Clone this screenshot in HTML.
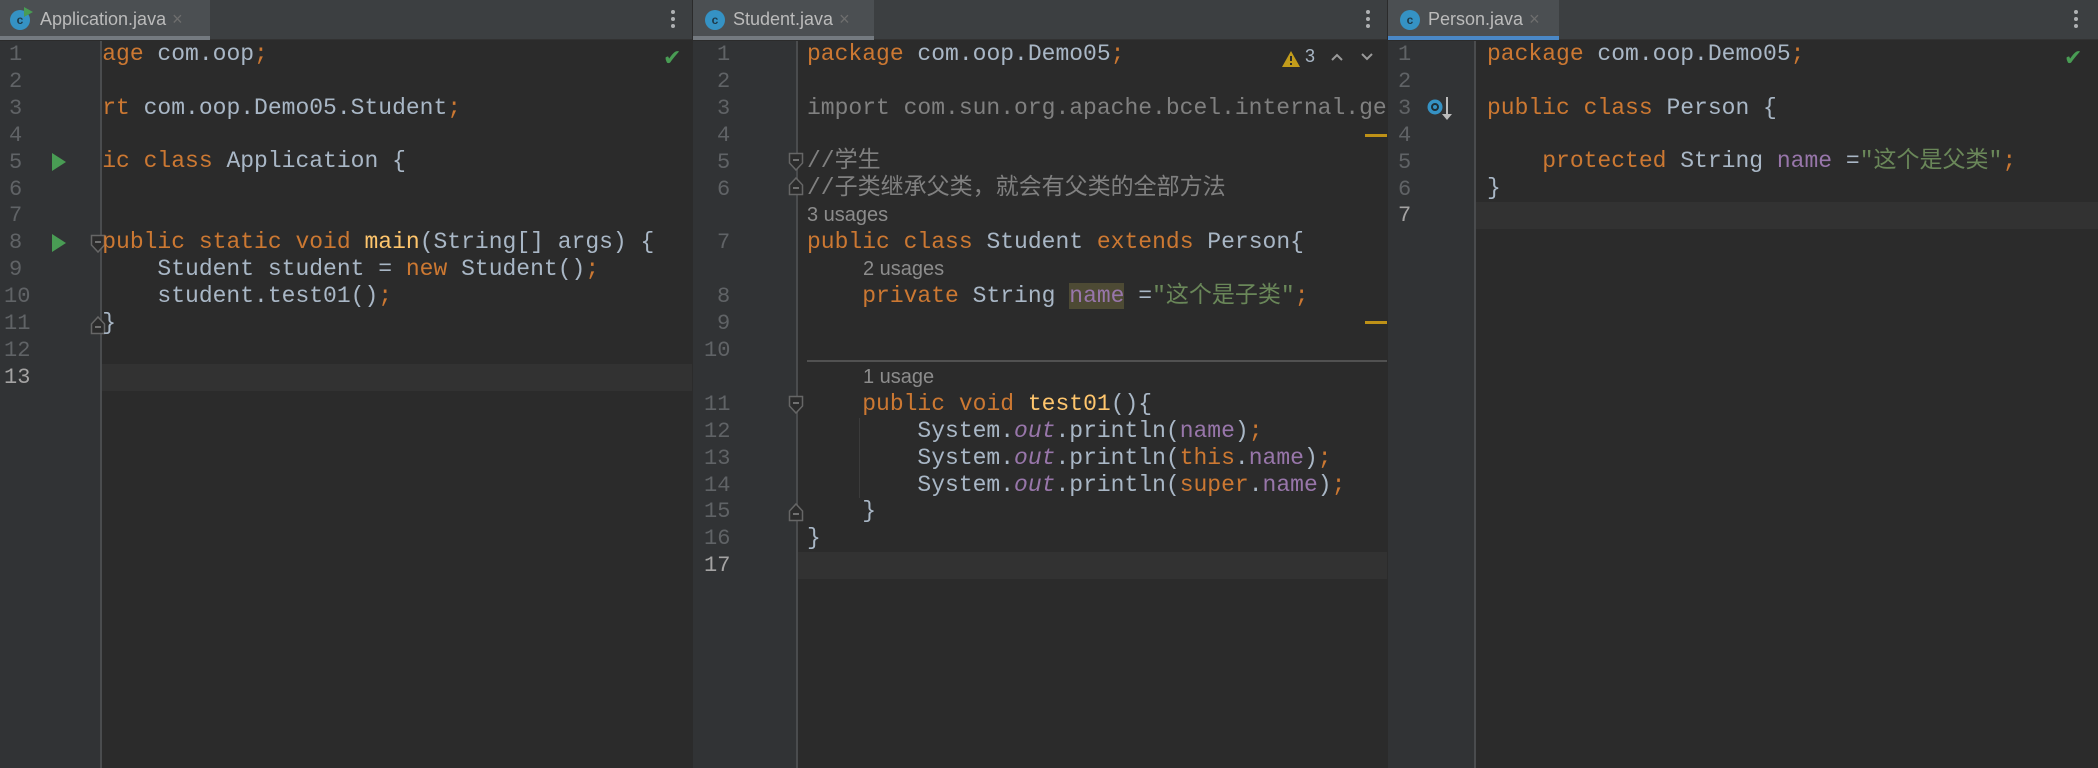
<!DOCTYPE html>
<html><head><meta charset="utf-8"><style>
*{margin:0;padding:0;box-sizing:border-box}
body{width:2098px;height:768px;background:#2b2b2b;position:relative;overflow:hidden;font-family:"Liberation Mono","Noto Sans CJK SC",monospace}
.panel{position:absolute;top:0;height:768px;overflow:hidden;background:#2b2b2b}
.tabbar{position:absolute;left:0;right:0;top:0;height:40px;background:#3c3f41;border-bottom:1px solid #323232}
.tab{position:absolute;top:0;height:40px;background:#4b4f52;font-family:"Liberation Sans",sans-serif;font-size:18px;color:#bbbbbb;line-height:38px;white-space:nowrap}
.tab .ul{position:absolute;left:0;right:0;bottom:0;height:4px;background:#747a80}
.tab .ic{position:absolute;top:10px;width:20px;height:20px;border-radius:50%;background:#3592c4;color:#1e3a4a;font-size:12px;line-height:20px;text-align:center;font-weight:bold}
.tab .x{color:#6e6e6e;font-size:18px;margin-left:6px}
.kebab{position:absolute;top:10px;width:4px}
.kebab i{display:block;width:4px;height:4px;border-radius:50%;background:#afb1b3;margin-bottom:3px}
.gut{position:absolute;top:41px;bottom:0;left:0;background:#313335}
.gline{position:absolute;top:41px;bottom:0;width:2px;background:#4a4c4e}
.ln{position:absolute;font-size:22px;color:#606366;line-height:27px;height:27px}
.cur{color:#a4a3a3}
.code{position:absolute;top:41px;bottom:0;overflow:hidden}
.l{position:absolute;left:0;white-space:pre;font-size:23px;line-height:27px;height:27px;color:#a9b7c6}
.h{position:absolute;white-space:pre;font-family:"Liberation Sans",sans-serif;font-size:20px;line-height:27px;color:#8c8c8c}
.k{color:#cc7832}.s{color:#6a8759}.f{color:#9876aa}.m{color:#ffc66d}.c{color:#808080}.it{font-style:italic}
.curline{position:absolute;left:0;right:0;height:27px;background:#323232}
.run{position:absolute;width:0;height:0;border-top:9px solid transparent;border-bottom:9px solid transparent;border-left:14px solid #499c54}
.chk{position:absolute;color:#499c54;font-size:22px;font-family:"DejaVu Sans",sans-serif}
</style></head><body>

<!-- Panel 1 -->
<div class="panel" style="left:0;width:692px">
 <div class="tabbar"></div>
 <div class="tab" style="left:0;width:210px"><span class="ic" style="left:10px">c</span><svg style="position:absolute;left:22px;top:6px" width="12" height="12"><path d="M2 1 L11 6 L2 11Z" fill="#499c54"/></svg><span style="position:absolute;left:40px">Application.java<span class="x">×</span></span><div class="ul"></div></div>
 <div class="kebab" style="left:671px"><i></i><i></i><i></i></div>
 <div class="gut" style="width:100px"></div>
 <div class="gline" style="left:100px"></div>
 <div class="curline" style="top:364px;left:102px"></div>
 <div class="ln" style="left:9px;top:41px">1</div>
 <div class="ln" style="left:9px;top:68px">2</div>
 <div class="ln" style="left:9px;top:95px">3</div>
 <div class="ln" style="left:9px;top:122px">4</div>
 <div class="ln" style="left:9px;top:149px">5</div>
 <div class="ln" style="left:9px;top:176px">6</div>
 <div class="ln" style="left:9px;top:202px">7</div>
 <div class="ln" style="left:9px;top:229px">8</div>
 <div class="ln" style="left:9px;top:256px">9</div>
 <div class="ln" style="left:4px;top:283px">10</div>
 <div class="ln" style="left:4px;top:310px">11</div>
 <div class="ln" style="left:4px;top:337px">12</div>
 <div class="ln cur" style="left:4px;top:364px">13</div>
 <div class="run" style="left:52px;top:153px"></div>
 <div class="run" style="left:52px;top:234px"></div>
 <svg style="position:absolute;left:90px;top:234px" width="16" height="22"><path d="M1.5 1.5H14.5V11L8 18L1.5 11Z" fill="#2b2b2b" stroke="#666" stroke-width="1.5"/><path d="M5 8H11" stroke="#888" stroke-width="1.5"/></svg>
 <svg style="position:absolute;left:90px;top:313px" width="16" height="22"><path d="M1.5 20.5H14.5V11L8 4L1.5 11Z" fill="#2b2b2b" stroke="#666" stroke-width="1.5"/><path d="M5 14H11" stroke="#888" stroke-width="1.5"/></svg>
 <div class="code" style="left:102px;right:0">
  <div style="position:absolute;left:-55px;top:0;width:800px">
   <div class="l" style="top:0"><span class="k">package</span> com.oop<span class="k">;</span></div>
   <div class="l" style="top:54px"><span class="k">import</span> com.oop.Demo05.Student<span class="k">;</span></div>
   <div class="l" style="top:107px"><span class="k">public class</span> Application {</div>
   <div class="l" style="top:188px">    <span class="k">public static void</span> <span class="m">main</span>(String[] args) {</div>
   <div class="l" style="top:215px">        Student student = <span class="k">new</span> Student()<span class="k">;</span></div>
   <div class="l" style="top:242px">        student.test01()<span class="k">;</span></div>
   <div class="l" style="top:269px">    }</div>
  </div>
 </div>
 <div class="chk" style="left:663px;top:46px">✔</div>
</div>
<div style="position:absolute;left:692px;top:0;width:1px;height:768px;background:#2b2b2b"></div>

<!-- Panel 2 -->
<div class="panel" style="left:693px;width:694px">
 <div class="tabbar"></div>
 <div class="tab" style="left:0;width:181px"><span class="ic" style="left:12px">c</span><span style="position:absolute;left:40px">Student.java<span class="x">×</span></span><div class="ul"></div></div>
 <div class="kebab" style="left:673px"><i></i><i></i><i></i></div>
 <div class="gut" style="width:103px"></div>
 <div class="gline" style="left:103px"></div>
 <div class="curline" style="top:552px;left:105px"></div>
 <div class="ln" style="left:24px;top:41px">1</div>
 <div class="ln" style="left:24px;top:68px">2</div>
 <div class="ln" style="left:24px;top:95px">3</div>
 <div class="ln" style="left:24px;top:122px">4</div>
 <div class="ln" style="left:24px;top:149px">5</div>
 <div class="ln" style="left:24px;top:176px">6</div>
 <div class="ln" style="left:24px;top:229px">7</div>
 <div class="ln" style="left:24px;top:283px">8</div>
 <div class="ln" style="left:24px;top:310px">9</div>
 <div class="ln" style="left:11px;top:337px">10</div>
 <div class="ln" style="left:11px;top:391px">11</div>
 <div class="ln" style="left:11px;top:418px">12</div>
 <div class="ln" style="left:11px;top:445px">13</div>
 <div class="ln" style="left:11px;top:472px">14</div>
 <div class="ln" style="left:11px;top:498px">15</div>
 <div class="ln" style="left:11px;top:525px">16</div>
 <div class="ln cur" style="left:11px;top:552px">17</div>
 <svg style="position:absolute;left:95px;top:152px" width="16" height="44"><path d="M1.5 1.5H14.5V11L8 18L1.5 11Z" fill="#2b2b2b" stroke="#666" stroke-width="1.5"/><path d="M5 8H11" stroke="#888" stroke-width="1.5"/><path d="M1.5 42.5H14.5V33L8 26L1.5 33Z" fill="#2b2b2b" stroke="#666" stroke-width="1.5"/><path d="M5 36H11" stroke="#888" stroke-width="1.5"/></svg>
 <svg style="position:absolute;left:95px;top:395px" width="16" height="22"><path d="M1.5 1.5H14.5V11L8 18L1.5 11Z" fill="#2b2b2b" stroke="#666" stroke-width="1.5"/><path d="M5 8H11" stroke="#888" stroke-width="1.5"/></svg>
 <svg style="position:absolute;left:95px;top:500px" width="16" height="22"><path d="M1.5 20.5H14.5V11L8 4L1.5 11Z" fill="#2b2b2b" stroke="#666" stroke-width="1.5"/><path d="M5 14H11" stroke="#888" stroke-width="1.5"/></svg>
 <div class="code" style="left:105px;right:0">
  <div style="position:absolute;left:9px;top:0;width:900px">
   <div class="l" style="top:0"><span class="k">package</span> com.oop.Demo05<span class="k">;</span></div>
   <div class="l c" style="top:54px">import com.sun.org.apache.bcel.internal.generic.ACONST_NULL;</div>
   <div class="l c" style="top:107px">//学生</div>
   <div class="l c" style="top:134px">//子类继承父类，就会有父类的全部方法</div>
   <div class="h" style="top:161px">3 usages</div>
   <div class="l" style="top:188px"><span class="k">public class</span> Student <span class="k">extends</span> Person{</div>
   <div class="h" style="top:215px;left:56px">2 usages</div>
   <div class="l" style="top:242px">    <span class="k">private</span> String <span class="f" style="background:#4d4a34">name</span> =<span class="s">"这个是子类"</span><span class="k">;</span></div>
   <div style="position:absolute;left:0;top:319px;width:900px;height:2px;background:#515151"></div>
   <div class="h" style="top:323px;left:56px">1 usage</div>
   <div class="l" style="top:350px">    <span class="k">public void</span> <span class="m">test01</span>(){</div>
   <div style="position:absolute;left:52px;top:377px;width:1px;height:80px;background:#3b3b3b"></div>
   <div class="l" style="top:377px">        System.<span class="f it">out</span>.println(<span class="f">name</span>)<span class="k">;</span></div>
   <div class="l" style="top:404px">        System.<span class="f it">out</span>.println(<span class="k">this</span>.<span class="f">name</span>)<span class="k">;</span></div>
   <div class="l" style="top:431px">        System.<span class="f it">out</span>.println(<span class="k">super</span>.<span class="f">name</span>)<span class="k">;</span></div>
   <div class="l" style="top:457px">    }</div>
   <div class="l" style="top:484px">}</div>
  </div>
 </div>
 <div style="position:absolute;left:576px;top:44px;width:120px;height:30px;background:#2b2b2b"></div>
 <svg style="position:absolute;left:588px;top:50px" width="20" height="18"><path d="M10 1L19 17H1Z" fill="#c29c1b"/><path d="M10 6V11M10 13V15" stroke="#2b2b2b" stroke-width="2"/></svg>
 <div style="position:absolute;left:612px;top:46px;font-family:'Liberation Sans',sans-serif;font-size:18px;color:#a9b7c6">3</div>
 <svg style="position:absolute;left:637px;top:52px" width="14" height="10"><path d="M2 8L7 3L12 8" stroke="#9a9a9a" stroke-width="2" fill="none"/></svg>
 <svg style="position:absolute;left:667px;top:52px" width="14" height="10"><path d="M2 2L7 7L12 2" stroke="#9a9a9a" stroke-width="2" fill="none"/></svg>
 <div style="position:absolute;left:672px;top:134px;width:22px;height:3px;background:#be9117"></div>
 <div style="position:absolute;left:672px;top:321px;width:22px;height:3px;background:#be9117"></div>
</div>
<div style="position:absolute;left:1387px;top:0;width:1px;height:768px;background:#2b2b2b"></div>

<!-- Panel 3 -->
<div class="panel" style="left:1388px;width:710px">
 <div class="tabbar"></div>
 <div class="tab" style="left:0;width:171px"><span class="ic" style="left:12px">c</span><span style="position:absolute;left:40px">Person.java<span class="x">×</span></span><div class="ul" style="background:#4a88c7"></div></div>
 <div class="kebab" style="left:686px"><i></i><i></i><i></i></div>
 <div class="gut" style="width:86px"></div>
 <div class="gline" style="left:86px"></div>
 <div class="curline" style="top:202px;left:88px"></div>
 <div class="ln" style="left:10px;top:41px">1</div>
 <div class="ln" style="left:10px;top:68px">2</div>
 <div class="ln" style="left:10px;top:95px">3</div>
 <div class="ln" style="left:10px;top:122px">4</div>
 <div class="ln" style="left:10px;top:149px">5</div>
 <div class="ln" style="left:10px;top:176px">6</div>
 <div class="ln cur" style="left:10px;top:202px">7</div>
 <svg style="position:absolute;left:38px;top:95px" width="30" height="28"><circle cx="9" cy="12" r="7.5" fill="#3592c4"/><circle cx="9" cy="12" r="3" fill="none" stroke="#1f2f38" stroke-width="2"/><path d="M21 2V20" stroke="#bbb" stroke-width="2"/><path d="M16 19H26L21 25Z" fill="#bbb"/></svg>
 <div class="code" style="left:88px;right:0">
  <div style="position:absolute;left:11px;top:0;width:900px">
   <div class="l" style="top:0"><span class="k">package</span> com.oop.Demo05<span class="k">;</span></div>
   <div class="l" style="top:54px"><span class="k">public class</span> Person {</div>
   <div class="l" style="top:107px">    <span class="k">protected</span> String <span class="f">name</span> =<span class="s">"这个是父类"</span><span class="k">;</span></div>
   <div class="l" style="top:134px">}</div>
  </div>
 </div>
 <div class="chk" style="left:676px;top:46px">✔</div>
</div>
</body></html>
